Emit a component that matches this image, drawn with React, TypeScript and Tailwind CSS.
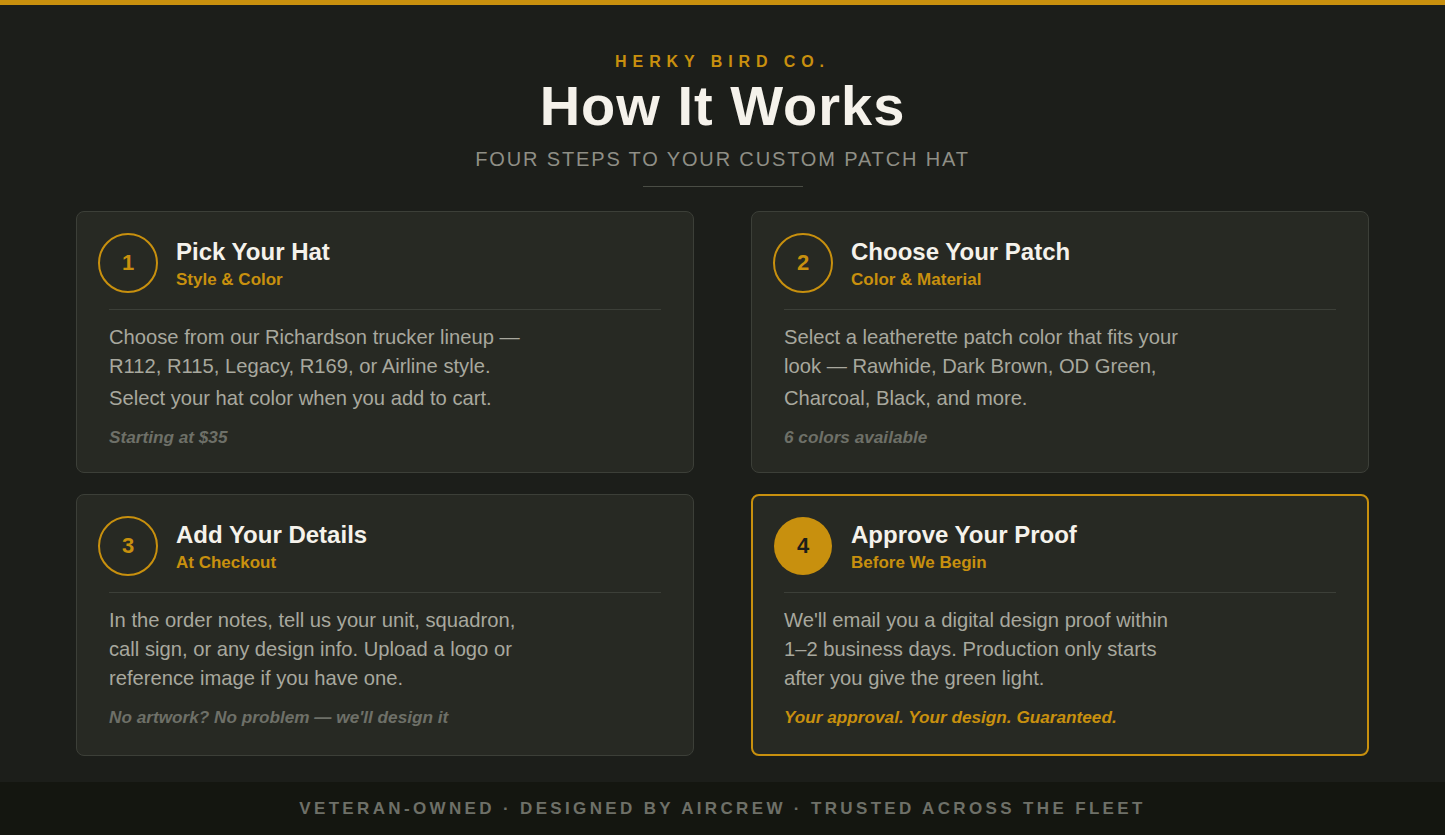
const font = "font-['Liberation_Sans',Arial,sans-serif]";

function Card({ n, title, sub, lines, note, hi, gapLast }: { n: string; title: string; sub: string; lines: string[]; note: string; hi?: boolean; gapLast?: boolean }) {
  return (
    <div className={`rounded-lg bg-[#272923] h-[262px] ${hi ? "border-2 border-[#c8900e] px-[20px] pt-[20px]" : "border border-[#3c3f38] px-[21px] pt-[21px]"}`}>
      <div className="flex items-start gap-[18px] h-[60px]">
        {hi ? (
          <div className="w-[58px] h-[58px] m-px rounded-full flex items-center justify-center pb-[2px] text-[22px] font-bold bg-[#c8900e] text-[#1c1e1a]">{n}</div>
        ) : (
          <div className="w-[60px] h-[60px] rounded-full flex items-center justify-center pb-[2px] text-[22px] font-bold border-2 border-[#c8900e] text-[#c8900e]">{n}</div>
        )}
        <div className="pt-[4px]">
          <div className="text-[24px] leading-[30px] font-bold text-[#f5f2eb]">{title}</div>
          <div className="mt-[1px] text-[17px] leading-[24px] font-bold text-[#c8900e]">{sub}</div>
        </div>
      </div>
      <div className="mx-[11px] mt-[16px]">
        <div className="h-px bg-[#3c3f38]" />
        <div className="pt-[13px]">
          {lines.map((l, i) => (
            <div key={l} className={`text-[20.2px] leading-[29px] text-[#a8a89e] ${gapLast && i === 2 ? "mt-[3px]" : ""}`}>{l}</div>
          ))}
          <div className={`mt-[12px] text-[17.2px] leading-[24px] italic font-bold ${hi ? "text-[#c8900e]" : "text-[#6e7068]"}`}>{note}</div>
        </div>
      </div>
    </div>
  );
}

export default function App() {
  return (
    <div className={`${font} w-full h-[835px] bg-[#1c1e1a] flex flex-col overflow-hidden`}>
      <div className="h-[5px] bg-[#c8900e]" />
      <div className="flex flex-col items-center pt-[46px]">
        <div className="text-[16px] leading-[21px] font-bold tracking-[5.9px] text-[#c8900e]">HERKY BIRD CO.</div>
        <div className="text-[56px] leading-[68px] font-bold tracking-[1px] text-[#f5f2eb]">How It Works</div>
        <div className="text-[20px] leading-[26px] tracking-[1.85px] text-[#8f8f86] mt-[6px]">FOUR STEPS TO YOUR CUSTOM PATCH HAT</div>
        <div className="w-[160px] h-px bg-[#4a4d45] mt-[14px]" />
      </div>
      <div className="grid grid-cols-2 gap-x-[57px] gap-y-[21px] px-[76px] mt-[24px]">
        <Card gapLast n="1" title="Pick Your Hat" sub="Style & Color" lines={["Choose from our Richardson trucker lineup —", "R112, R115, Legacy, R169, or Airline style.", "Select your hat color when you add to cart."]} note="Starting at $35" />
        <Card gapLast n="2" title="Choose Your Patch" sub="Color & Material" lines={["Select a leatherette patch color that fits your", "look — Rawhide, Dark Brown, OD Green,", "Charcoal, Black, and more."]} note="6 colors available" />
        <Card n="3" title="Add Your Details" sub="At Checkout" lines={["In the order notes, tell us your unit, squadron,", "call sign, or any design info. Upload a logo or", "reference image if you have one."]} note="No artwork? No problem — we'll design it" />
        <Card hi n="4" title="Approve Your Proof" sub="Before We Begin" lines={["We'll email you a digital design proof within", "1–2 business days. Production only starts", "after you give the green light."]} note="Your approval. Your design. Guaranteed." />
      </div>
      <div className="mt-auto h-[53px] pt-[1px] bg-[#141610] flex items-center justify-center text-[17px] font-bold tracking-[3.35px] text-[#6e7068]">VETERAN-OWNED · DESIGNED BY AIRCREW · TRUSTED ACROSS THE FLEET</div>
    </div>
  );
}
